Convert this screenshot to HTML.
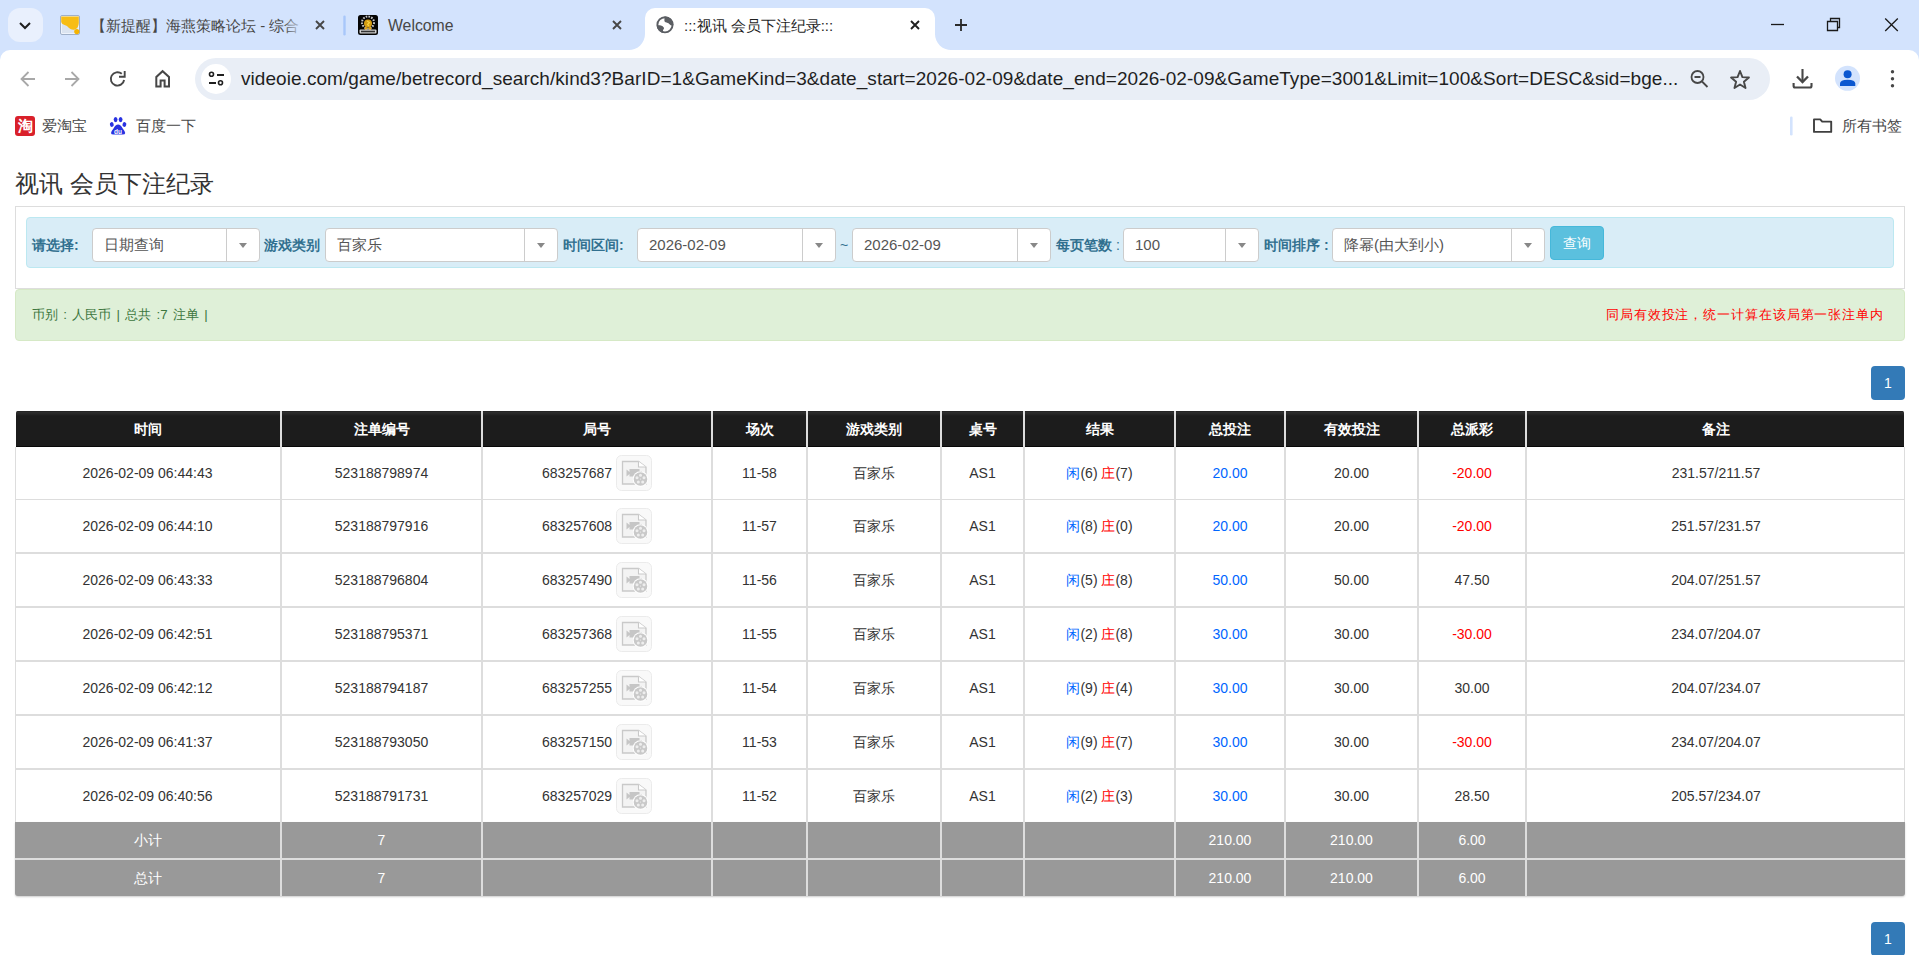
<!DOCTYPE html>
<html><head><meta charset="utf-8">
<style>
*{box-sizing:border-box;margin:0;padding:0}
html,body{width:1919px;height:955px;overflow:hidden;background:#fff;font-family:"Liberation Sans",sans-serif;color:#333;font-size:14px}
div,span{position:absolute}
svg{position:absolute;overflow:visible}
#strip{left:0;top:0;width:1919px;height:70px;background:#d3e3fd}
#toolbar{left:0;top:50px;width:1919px;height:905px;background:#fff;border-radius:10px 10px 0 0}
.tabt{top:15px;font-size:15px;color:#474747;white-space:nowrap;line-height:22px}
h3{position:absolute;left:15px;top:169px;font-size:24px;font-weight:normal;color:#333;line-height:30px;white-space:nowrap}
.panel{left:15px;top:206px;width:1890px;height:83px;border:1px solid #ddd;background:#fff}
.info{left:26px;top:217px;width:1868px;height:51px;background:#d9edf7;border:1px solid #bce8f1;border-radius:4px}
.lbl{top:236px;font-size:14px;font-weight:bold;color:#31708f;white-space:nowrap;line-height:18px}
.sel{top:228px;height:34px;background:#fff;border:1px solid #ccc;border-radius:4px}
.sel .t{left:11px;top:7px;font-size:15px;color:#555;white-space:nowrap;line-height:18px}
.sel .d{top:0;bottom:0;width:1px;background:#ccc}
.sel .c{top:14px;width:0;height:0;border-left:4px solid transparent;border-right:4px solid transparent;border-top:5px solid #888}
.btn{left:1550px;top:226px;width:54px;height:34px;background:#5bc0de;border:1px solid #46b8da;border-radius:4px;color:#fff;font-size:14px;text-align:center;line-height:32px}
.succ{left:15px;top:289px;width:1890px;height:52px;background:#dff0d8;border:1px solid #d6e9c6;border-radius:4px}
.succ .l{left:16px;top:15px;font-size:13.3px;color:#3c763d;white-space:nowrap;line-height:20px;word-spacing:1.6px}
.succ .r{right:20px;top:15px;font-size:13.3px;color:#f00;white-space:nowrap;line-height:20px;letter-spacing:0.9px}
.pg{left:1871px;width:34px;height:34px;background:#337ab7;border-radius:4px;color:#fff;font-size:14px;text-align:center;line-height:34px}
.bmt{top:115px;font-size:15px;line-height:22px;color:#474747;white-space:nowrap}
.cell{text-align:center;white-space:nowrap;font-size:14px;color:#333}
.cell span{position:static}
.thead{background:linear-gradient(#1a1a1a 0,#2e2e2e 1px,#262626 3px,#1c1c1c 5px,#1c1c1c 100%);border-radius:1.5px 1.5px 0 0;border-bottom:1px solid #080808}
.vd{width:2px;background:#ddd}
.hd{height:1px;background:#ddd}
.gray{background:#999;border-radius:0 0 3px 3px;box-shadow:0 1px 2px rgba(0,0,0,.2)}
.cell .jh{position:relative;left:-20px}
.cell .vid{position:absolute;left:134px;top:8px;width:36px;height:36px;border:1px solid #e6e6e6;border-radius:4px;background:#f9f9f9}
</style></head><body>
<div id="strip"></div>
<div id="toolbar"></div>

<!-- tab strip -->
<div class="abs" style="left:8px;top:8px;width:35px;height:34px;border-radius:12px;background:#e9f0fd"></div>
<svg style="left:0;top:0" width="1919" height="50">
  <path d="M20 23 L25 28 L30 23" fill="none" stroke="#1f1f1f" stroke-width="2"/>
</svg>
<!-- tab1 favicon -->
<svg style="left:60px;top:15px" width="20" height="20">
  <rect x="0.5" y="0.5" width="19" height="19" rx="1.5" fill="#eef3fb" stroke="#9fb0c8" stroke-width="1"/>
  <rect x="2" y="9" width="16" height="9" fill="#dbe4f0"/>
  <path d="M1.2 1.5 L18.8 1.5 L18.8 8 Q18.5 13 15 14.5 Q11.5 15.5 9 13 Q7.5 10.5 4 9.8 Q1.5 9 1.2 7 Z" fill="#f7bd14"/>
  <circle cx="16.8" cy="16.6" r="2.6" fill="#f5b300"/>
</svg>
<div class="tabt" style="left:91px;width:210px;overflow:hidden;color:#474747">【新提醒】海燕策略论坛 - 综合</div>
<div style="left:284px;top:10px;width:20px;height:30px;background:linear-gradient(to right,rgba(211,227,253,0),#d3e3fd 95%)"></div>
<svg style="left:0;top:0" width="1919" height="50">
  <path d="M316 21 L324 29 M324 21 L316 29" stroke="#474747" stroke-width="1.9"/>
  <rect x="343.3" y="15.5" width="2.4" height="20" rx="1.2" fill="#a8c7fa"/>
  <path d="M613 21 L621 29 M621 21 L613 29" stroke="#474747" stroke-width="1.9"/>
</svg>
<!-- tab2 favicon -->
<svg style="left:358px;top:15px" width="20" height="20">
  <rect x="0" y="0" width="20" height="20" rx="2.5" fill="#050505"/>
  <circle cx="10" cy="7.5" r="6" fill="none" stroke="#c8c8c8" stroke-width="2" stroke-dasharray="1.6 1.2"/>
  <circle cx="10" cy="8.5" r="4" fill="#d39b12"/>
  <path d="M9 6 L11.5 7.5 L9.5 9.5 L11 11" stroke="#f7d040" stroke-width="1.2" fill="none"/>
  <circle cx="8" cy="13.5" r="1.5" fill="#e0a010"/>
  <circle cx="12" cy="13.5" r="1.5" fill="#e0a010"/>
  <rect x="1.5" y="14.5" width="17" height="4" rx="1" fill="#d0d0d0"/>
  <rect x="3" y="15.7" width="14" height="1.6" fill="#333"/>
</svg>
<div class="tabt" style="left:388px;color:#474747;font-size:15.8px">Welcome</div>
<!-- active tab -->
<svg style="left:0;top:0" width="1919" height="50">
  <path d="M628 50 A16 16 0 0 0 645 34 L645 18 A10 10 0 0 1 655 8 L925 8 A10 10 0 0 1 935 18 L935 34 A16 16 0 0 0 952 50 Z" fill="#fff"/>
  <defs><clipPath id="gclip"><circle cx="665" cy="24.8" r="8.4"/></clipPath></defs>
  <circle cx="665" cy="24.8" r="7.6" fill="none" stroke="#5b5e63" stroke-width="1.9"/>
  <g clip-path="url(#gclip)" fill="#5b5e63">
  <path d="M664.6 15 L676 15 L676 25.2 L673 25.3 Q671 25.8 669.8 24.6 Q668.8 22.8 666.5 22.4 Q664.3 22.2 664.4 20.5 Z"/>
  <path d="M655 25.2 L660 25.3 Q662.8 25.6 663.8 27.4 Q664.4 28.8 663.2 29.8 Q662.6 31 663.4 35 L655 35 Z"/>
  </g>
  <path d="M911 21 L919 29 M919 21 L911 29" stroke="#1f1f1f" stroke-width="1.9"/>
  <path d="M961 19 L961 31 M955 25 L967 25" stroke="#2a2a2a" stroke-width="1.8"/>
  <path d="M1771 24.5 L1784 24.5" stroke="#1a1a1a" stroke-width="1.3"/>
  <path d="M1827.5 21.5 L1827.5 30.5 L1837.5 30.5 L1837.5 21.5 Z M1830.5 21.5 L1830.5 18.5 L1839.5 18.5 L1839.5 27.5 L1837.5 27.5" fill="none" stroke="#1a1a1a" stroke-width="1.3"/>
  <path d="M1885.2 18.5 L1897.8 31 M1897.8 18.5 L1885.2 31" stroke="#1a1a1a" stroke-width="1.3"/>
</svg>
<div class="tabt" style="left:684px;color:#1f1f1f">:::视讯 会员下注纪录:::</div>
<!-- toolbar -->
<div id="omni" style="left:195px;top:58px;width:1575px;height:42px;border-radius:21px;background:#e9eef6"></div>
<div style="left:201px;top:64px;width:30px;height:30px;border-radius:50%;background:#fff"></div>
<svg style="left:0;top:50px" width="1919" height="56">
  <!-- back -->
  <path d="M35 29 L21.5 29 M28.5 22 L21.5 29 L28.5 36" fill="none" stroke="#a8a8a8" stroke-width="1.8"/>
  <path d="M65 29 L78.5 29 M71.5 22 L78.5 29 L71.5 36" fill="none" stroke="#a8a8a8" stroke-width="1.8"/>
  <!-- reload -->
  <path d="M124.1 30 A6.7 6.7 0 1 1 121.8 23.8" fill="none" stroke="#474747" stroke-width="1.9"/>
  <path d="M119 26.8 L124.7 26.8 L124.7 21" fill="none" stroke="#474747" stroke-width="1.9"/>
  <!-- home -->
  <path d="M156.3 36.5 L156.3 27 L162.6 21.2 L169 27 L169 36.5 L164.6 36.5 L164.6 30.5 L160.6 30.5 L160.6 36.5 Z" fill="none" stroke="#474747" stroke-width="2" stroke-linejoin="miter"/>
  <!-- tune -->
  <circle cx="211.5" cy="24.3" r="2" fill="none" stroke="#1f1f1f" stroke-width="1.6"/>
  <path d="M217 25 L224 25 M209 33 L216 33" stroke="#1f1f1f" stroke-width="1.8"/>
  <circle cx="220.5" cy="32.8" r="2" fill="none" stroke="#1f1f1f" stroke-width="1.6"/>
  <!-- zoom -->
  <circle cx="1697.5" cy="27" r="6" fill="none" stroke="#474747" stroke-width="1.8"/>
  <path d="M1694.5 27 L1700.5 27 M1702 31.5 L1707.5 37" stroke="#474747" stroke-width="1.8"/>
  <!-- star -->
  <path d="M1740.00 21.00 L1742.41 27.08 L1748.94 27.50 L1743.90 31.67 L1745.53 38.00 L1740.00 34.50 L1734.47 38.00 L1736.10 31.67 L1731.06 27.50 L1737.59 27.08 Z" fill="none" stroke="#474747" stroke-width="1.9" stroke-linejoin="round"/>
  <!-- download -->
  <path d="M1802.5 19 L1802.5 32" stroke="#474747" stroke-width="2.1"/>
  <path d="M1797 26.5 L1802.5 32 L1808 26.5" fill="none" stroke="#474747" stroke-width="2.3"/>
  <path d="M1793.6 33 L1793.6 36 Q1793.6 37.5 1795.1 37.5 L1810 37.5 Q1811.5 37.5 1811.5 36 L1811.5 33" fill="none" stroke="#474747" stroke-width="2.1"/>
  <!-- profile -->
  <circle cx="1847.5" cy="28.3" r="12.5" fill="#d3e3fd"/>
  <circle cx="1847.6" cy="24.2" r="4" fill="#0b57d0"/>
  <path d="M1840 36 L1840 33.6 Q1840 29.7 1847.6 29.7 Q1855.3 29.7 1855.3 33.6 L1855.3 36 Z" fill="#0b57d0"/>
  <!-- menu -->
  <circle cx="1892.5" cy="21.8" r="1.7" fill="#474747"/>
  <circle cx="1892.5" cy="28.8" r="1.7" fill="#474747"/>
  <circle cx="1892.5" cy="35.7" r="1.7" fill="#474747"/>
</svg>
<div id="url" style="left:241px;top:67px;font-size:19px;letter-spacing:0.05px;line-height:24px;color:#1f1f1f;white-space:nowrap">videoie.com/game/betrecord_search/kind3?BarID=1&amp;GameKind=3&amp;date_start=2026-02-09&amp;date_end=2026-02-09&amp;GameType=3001&amp;Limit=100&amp;Sort=DESC&amp;sid=bge...</div>
<!-- bookmarks -->
<div style="left:15px;top:116px;width:20px;height:20px;background:#d9202a;border-radius:3px;color:#fff;font-size:15px;line-height:20px;text-align:center;font-weight:bold">淘</div>
<div class="bmt" style="left:42px">爱淘宝</div>
<svg style="left:0;top:106px" width="1919" height="40">
  <ellipse cx="111.8" cy="18.5" rx="1.9" ry="2.4" fill="#2932e1" transform="rotate(-15 111.8 18.5)"/>
  <ellipse cx="115.6" cy="13.6" rx="1.9" ry="2.6" fill="#2932e1"/>
  <ellipse cx="120.6" cy="13.6" rx="1.9" ry="2.6" fill="#2932e1"/>
  <ellipse cx="124.4" cy="18.5" rx="1.9" ry="2.4" fill="#2932e1" transform="rotate(15 124.4 18.5)"/>
  <path d="M118.1 18.5 Q115.5 18.5 113.5 22.5 Q111 25.5 111 27 Q111 28.6 113.5 28.6 L122.7 28.6 Q125.2 28.6 125.2 27 Q125.2 25.5 122.7 22.5 Q120.7 18.5 118.1 18.5 Z" fill="#2932e1"/>
  <text x="118.1" y="27.6" font-size="6.5" font-family="Liberation Sans" font-weight="bold" fill="#fff" text-anchor="middle">du</text>
  <rect x="1790" y="10.5" width="2.6" height="19" rx="1.3" fill="#d3e3fd"/>
  <path d="M1814 13.4 L1820.2 13.4 L1822.2 15.6 L1831.2 15.6 L1831.2 25.9 L1814 25.9 Z" fill="none" stroke="#3f3f3f" stroke-width="1.9" stroke-linejoin="round"/>
</svg>
<div class="bmt" style="left:136px">百度一下</div>
<div class="bmt" style="left:1842px">所有书签</div>

<h3>视讯 会员下注纪录</h3>
<div class="panel"></div>
<div class="info"></div>
<div class="lbl" style="left:32px">请选择:</div>
<div class="sel" style="left:92px;width:168px"><div class="t">日期查询</div><div class="d" style="left:133px"></div><div class="c" style="left:146px"></div></div>
<div class="lbl" style="left:264px">游戏类别</div>
<div class="sel" style="left:325px;width:233px"><div class="t">百家乐</div><div class="d" style="left:198px"></div><div class="c" style="left:211px"></div></div>
<div class="lbl" style="left:563px">时间区间:</div>
<div class="sel" style="left:637px;width:199px"><div class="t">2026-02-09</div><div class="d" style="left:164px"></div><div class="c" style="left:177px"></div></div>
<div class="lbl" style="left:840px;font-weight:normal">~</div>
<div class="sel" style="left:852px;width:199px"><div class="t">2026-02-09</div><div class="d" style="left:164px"></div><div class="c" style="left:177px"></div></div>
<div class="lbl" style="left:1056px">每页笔数 <span style="position:static;font-weight:normal">:</span></div>
<div class="sel" style="left:1123px;width:136px"><div class="t">100</div><div class="d" style="left:101px"></div><div class="c" style="left:114px"></div></div>
<div class="lbl" style="left:1264px">时间排序 :</div>
<div class="sel" style="left:1332px;width:213px"><div class="t">降幂(由大到小)</div><div class="d" style="left:178px"></div><div class="c" style="left:191px"></div></div>
<div class="btn">查询</div>

<div class="succ"><div class="l">币别 : 人民币 | 总共 :7 注单 |</div><div class="r">同局有效投注，统一计算在该局第一张注单内</div></div>
<div class="pg" style="top:366px">1</div>
<svg width="0" height="0" style="left:0;top:0">
<defs>
<symbol id="vidicon" viewBox="0 0 36 36">
  <rect x="0.5" y="0.5" width="35" height="35" rx="5" fill="#f9f9f9" stroke="#ebebeb"/>
  <path d="M6.5 6.5 L22.5 6.5 L30 12 L30 29 L6.5 29 Z" fill="#f3f3f3" stroke="#c9c9c9" stroke-width="1.3"/>
  <path d="M22.5 6.5 L22.5 12 L30 12" fill="#fff" stroke="#c9c9c9" stroke-width="1.1"/>
  <path d="M10.5 14.5 L13.5 17 L13.5 14 L23.5 14 L23.5 16 L26 16 L26 20.5 L23.5 20.5 L23.5 21.5 L13.5 21.5 L13.5 19 L10.5 21.5 Z" fill="#c6c6c6"/>
  <circle cx="24.5" cy="24" r="7.8" fill="#fff"/>
  <circle cx="24.5" cy="24" r="6.8" fill="#c9c9c9"/>
  <circle cx="24.5" cy="20.3" r="1.5" fill="#eee"/>
  <circle cx="28" cy="22.8" r="1.5" fill="#eee"/>
  <circle cx="26.7" cy="27" r="1.5" fill="#eee"/>
  <circle cx="22.3" cy="27" r="1.5" fill="#eee"/>
  <circle cx="21" cy="22.8" r="1.5" fill="#eee"/>
  <circle cx="24.5" cy="24" r="0.6" fill="#eee"/>
</symbol>
</defs></svg>
<div class="thead" style="left:16px;top:411px;width:1888px;height:36px"></div>
<div class="cell" style="left:15px;top:411px;width:265px;height:36px;line-height:36px;color:#fff;font-weight:bold">时间</div>
<div class="cell" style="left:282px;top:411px;width:199px;height:36px;line-height:36px;color:#fff;font-weight:bold">注单编号</div>
<div class="cell" style="left:483px;top:411px;width:228px;height:36px;line-height:36px;color:#fff;font-weight:bold">局号</div>
<div class="cell" style="left:713px;top:411px;width:93px;height:36px;line-height:36px;color:#fff;font-weight:bold">场次</div>
<div class="cell" style="left:808px;top:411px;width:132px;height:36px;line-height:36px;color:#fff;font-weight:bold">游戏类别</div>
<div class="cell" style="left:942px;top:411px;width:81px;height:36px;line-height:36px;color:#fff;font-weight:bold">桌号</div>
<div class="cell" style="left:1025px;top:411px;width:149px;height:36px;line-height:36px;color:#fff;font-weight:bold">结果</div>
<div class="cell" style="left:1176px;top:411px;width:108px;height:36px;line-height:36px;color:#fff;font-weight:bold">总投注</div>
<div class="cell" style="left:1286px;top:411px;width:131px;height:36px;line-height:36px;color:#fff;font-weight:bold">有效投注</div>
<div class="cell" style="left:1419px;top:411px;width:106px;height:36px;line-height:36px;color:#fff;font-weight:bold">总派彩</div>
<div class="cell" style="left:1527px;top:411px;width:378px;height:36px;line-height:36px;color:#fff;font-weight:bold">备注</div>
<div class="vd" style="left:280px;top:411px;height:36px"></div>
<div class="vd" style="left:481px;top:411px;height:36px"></div>
<div class="vd" style="left:711px;top:411px;height:36px"></div>
<div class="vd" style="left:806px;top:411px;height:36px"></div>
<div class="vd" style="left:940px;top:411px;height:36px"></div>
<div class="vd" style="left:1023px;top:411px;height:36px"></div>
<div class="vd" style="left:1174px;top:411px;height:36px"></div>
<div class="vd" style="left:1284px;top:411px;height:36px"></div>
<div class="vd" style="left:1417px;top:411px;height:36px"></div>
<div class="vd" style="left:1525px;top:411px;height:36px"></div>
<div class="cell" style="left:15px;top:447px;width:265px;height:52px;line-height:52px;">2026-02-09 06:44:43</div>
<div class="cell" style="left:282px;top:447px;width:199px;height:52px;line-height:52px;">523188798974</div>
<div class="cell" style="left:542px;top:447px;height:52px;line-height:52px;text-align:left">683257687</div>
<svg class="vid" style="left:616px;top:455px" width="36" height="36"><use href="#vidicon"/></svg>
<div class="cell" style="left:713px;top:447px;width:93px;height:52px;line-height:52px;">11-58</div>
<div class="cell" style="left:808px;top:447px;width:132px;height:52px;line-height:52px;">百家乐</div>
<div class="cell" style="left:942px;top:447px;width:81px;height:52px;line-height:52px;">AS1</div>
<div class="cell" style="left:1025px;top:447px;width:149px;height:52px;line-height:52px;"><span style="color:#06f">闲</span>(6) <span style="color:#f00">庄</span>(7)</div>
<div class="cell" style="left:1176px;top:447px;width:108px;height:52px;line-height:52px;"><span style="color:#06f">20.00</span></div>
<div class="cell" style="left:1286px;top:447px;width:131px;height:52px;line-height:52px;">20.00</div>
<div class="cell" style="left:1419px;top:447px;width:106px;height:52px;line-height:52px;"><span style="color:#f00">-20.00</span></div>
<div class="cell" style="left:1527px;top:447px;width:378px;height:52px;line-height:52px;">231.57/211.57</div>
<div class="hd" style="left:15px;top:499px;width:1890px;height:1px"></div>
<div class="cell" style="left:15px;top:500px;width:265px;height:52px;line-height:52px;">2026-02-09 06:44:10</div>
<div class="cell" style="left:282px;top:500px;width:199px;height:52px;line-height:52px;">523188797916</div>
<div class="cell" style="left:542px;top:500px;height:52px;line-height:52px;text-align:left">683257608</div>
<svg class="vid" style="left:616px;top:508px" width="36" height="36"><use href="#vidicon"/></svg>
<div class="cell" style="left:713px;top:500px;width:93px;height:52px;line-height:52px;">11-57</div>
<div class="cell" style="left:808px;top:500px;width:132px;height:52px;line-height:52px;">百家乐</div>
<div class="cell" style="left:942px;top:500px;width:81px;height:52px;line-height:52px;">AS1</div>
<div class="cell" style="left:1025px;top:500px;width:149px;height:52px;line-height:52px;"><span style="color:#06f">闲</span>(8) <span style="color:#f00">庄</span>(0)</div>
<div class="cell" style="left:1176px;top:500px;width:108px;height:52px;line-height:52px;"><span style="color:#06f">20.00</span></div>
<div class="cell" style="left:1286px;top:500px;width:131px;height:52px;line-height:52px;">20.00</div>
<div class="cell" style="left:1419px;top:500px;width:106px;height:52px;line-height:52px;"><span style="color:#f00">-20.00</span></div>
<div class="cell" style="left:1527px;top:500px;width:378px;height:52px;line-height:52px;">251.57/231.57</div>
<div class="hd" style="left:15px;top:552px;width:1890px;height:2px"></div>
<div class="cell" style="left:15px;top:554px;width:265px;height:52px;line-height:52px;">2026-02-09 06:43:33</div>
<div class="cell" style="left:282px;top:554px;width:199px;height:52px;line-height:52px;">523188796804</div>
<div class="cell" style="left:542px;top:554px;height:52px;line-height:52px;text-align:left">683257490</div>
<svg class="vid" style="left:616px;top:562px" width="36" height="36"><use href="#vidicon"/></svg>
<div class="cell" style="left:713px;top:554px;width:93px;height:52px;line-height:52px;">11-56</div>
<div class="cell" style="left:808px;top:554px;width:132px;height:52px;line-height:52px;">百家乐</div>
<div class="cell" style="left:942px;top:554px;width:81px;height:52px;line-height:52px;">AS1</div>
<div class="cell" style="left:1025px;top:554px;width:149px;height:52px;line-height:52px;"><span style="color:#06f">闲</span>(5) <span style="color:#f00">庄</span>(8)</div>
<div class="cell" style="left:1176px;top:554px;width:108px;height:52px;line-height:52px;"><span style="color:#06f">50.00</span></div>
<div class="cell" style="left:1286px;top:554px;width:131px;height:52px;line-height:52px;">50.00</div>
<div class="cell" style="left:1419px;top:554px;width:106px;height:52px;line-height:52px;">47.50</div>
<div class="cell" style="left:1527px;top:554px;width:378px;height:52px;line-height:52px;">204.07/251.57</div>
<div class="hd" style="left:15px;top:606px;width:1890px;height:2px"></div>
<div class="cell" style="left:15px;top:608px;width:265px;height:52px;line-height:52px;">2026-02-09 06:42:51</div>
<div class="cell" style="left:282px;top:608px;width:199px;height:52px;line-height:52px;">523188795371</div>
<div class="cell" style="left:542px;top:608px;height:52px;line-height:52px;text-align:left">683257368</div>
<svg class="vid" style="left:616px;top:616px" width="36" height="36"><use href="#vidicon"/></svg>
<div class="cell" style="left:713px;top:608px;width:93px;height:52px;line-height:52px;">11-55</div>
<div class="cell" style="left:808px;top:608px;width:132px;height:52px;line-height:52px;">百家乐</div>
<div class="cell" style="left:942px;top:608px;width:81px;height:52px;line-height:52px;">AS1</div>
<div class="cell" style="left:1025px;top:608px;width:149px;height:52px;line-height:52px;"><span style="color:#06f">闲</span>(2) <span style="color:#f00">庄</span>(8)</div>
<div class="cell" style="left:1176px;top:608px;width:108px;height:52px;line-height:52px;"><span style="color:#06f">30.00</span></div>
<div class="cell" style="left:1286px;top:608px;width:131px;height:52px;line-height:52px;">30.00</div>
<div class="cell" style="left:1419px;top:608px;width:106px;height:52px;line-height:52px;"><span style="color:#f00">-30.00</span></div>
<div class="cell" style="left:1527px;top:608px;width:378px;height:52px;line-height:52px;">234.07/204.07</div>
<div class="hd" style="left:15px;top:660px;width:1890px;height:2px"></div>
<div class="cell" style="left:15px;top:662px;width:265px;height:52px;line-height:52px;">2026-02-09 06:42:12</div>
<div class="cell" style="left:282px;top:662px;width:199px;height:52px;line-height:52px;">523188794187</div>
<div class="cell" style="left:542px;top:662px;height:52px;line-height:52px;text-align:left">683257255</div>
<svg class="vid" style="left:616px;top:670px" width="36" height="36"><use href="#vidicon"/></svg>
<div class="cell" style="left:713px;top:662px;width:93px;height:52px;line-height:52px;">11-54</div>
<div class="cell" style="left:808px;top:662px;width:132px;height:52px;line-height:52px;">百家乐</div>
<div class="cell" style="left:942px;top:662px;width:81px;height:52px;line-height:52px;">AS1</div>
<div class="cell" style="left:1025px;top:662px;width:149px;height:52px;line-height:52px;"><span style="color:#06f">闲</span>(9) <span style="color:#f00">庄</span>(4)</div>
<div class="cell" style="left:1176px;top:662px;width:108px;height:52px;line-height:52px;"><span style="color:#06f">30.00</span></div>
<div class="cell" style="left:1286px;top:662px;width:131px;height:52px;line-height:52px;">30.00</div>
<div class="cell" style="left:1419px;top:662px;width:106px;height:52px;line-height:52px;">30.00</div>
<div class="cell" style="left:1527px;top:662px;width:378px;height:52px;line-height:52px;">204.07/234.07</div>
<div class="hd" style="left:15px;top:714px;width:1890px;height:2px"></div>
<div class="cell" style="left:15px;top:716px;width:265px;height:52px;line-height:52px;">2026-02-09 06:41:37</div>
<div class="cell" style="left:282px;top:716px;width:199px;height:52px;line-height:52px;">523188793050</div>
<div class="cell" style="left:542px;top:716px;height:52px;line-height:52px;text-align:left">683257150</div>
<svg class="vid" style="left:616px;top:724px" width="36" height="36"><use href="#vidicon"/></svg>
<div class="cell" style="left:713px;top:716px;width:93px;height:52px;line-height:52px;">11-53</div>
<div class="cell" style="left:808px;top:716px;width:132px;height:52px;line-height:52px;">百家乐</div>
<div class="cell" style="left:942px;top:716px;width:81px;height:52px;line-height:52px;">AS1</div>
<div class="cell" style="left:1025px;top:716px;width:149px;height:52px;line-height:52px;"><span style="color:#06f">闲</span>(9) <span style="color:#f00">庄</span>(7)</div>
<div class="cell" style="left:1176px;top:716px;width:108px;height:52px;line-height:52px;"><span style="color:#06f">30.00</span></div>
<div class="cell" style="left:1286px;top:716px;width:131px;height:52px;line-height:52px;">30.00</div>
<div class="cell" style="left:1419px;top:716px;width:106px;height:52px;line-height:52px;"><span style="color:#f00">-30.00</span></div>
<div class="cell" style="left:1527px;top:716px;width:378px;height:52px;line-height:52px;">234.07/204.07</div>
<div class="hd" style="left:15px;top:768px;width:1890px;height:2px"></div>
<div class="cell" style="left:15px;top:770px;width:265px;height:52px;line-height:52px;">2026-02-09 06:40:56</div>
<div class="cell" style="left:282px;top:770px;width:199px;height:52px;line-height:52px;">523188791731</div>
<div class="cell" style="left:542px;top:770px;height:52px;line-height:52px;text-align:left">683257029</div>
<svg class="vid" style="left:616px;top:778px" width="36" height="36"><use href="#vidicon"/></svg>
<div class="cell" style="left:713px;top:770px;width:93px;height:52px;line-height:52px;">11-52</div>
<div class="cell" style="left:808px;top:770px;width:132px;height:52px;line-height:52px;">百家乐</div>
<div class="cell" style="left:942px;top:770px;width:81px;height:52px;line-height:52px;">AS1</div>
<div class="cell" style="left:1025px;top:770px;width:149px;height:52px;line-height:52px;"><span style="color:#06f">闲</span>(2) <span style="color:#f00">庄</span>(3)</div>
<div class="cell" style="left:1176px;top:770px;width:108px;height:52px;line-height:52px;"><span style="color:#06f">30.00</span></div>
<div class="cell" style="left:1286px;top:770px;width:131px;height:52px;line-height:52px;">30.00</div>
<div class="cell" style="left:1419px;top:770px;width:106px;height:52px;line-height:52px;">28.50</div>
<div class="cell" style="left:1527px;top:770px;width:378px;height:52px;line-height:52px;">205.57/234.07</div>
<div class="gray" style="left:15px;top:822px;width:1890px;height:74px"></div>
<div class="hd" style="left:15px;top:858px;width:1890px;height:2px"></div>
<div class="cell" style="left:15px;top:822px;width:265px;height:36px;line-height:36px;color:#fff">小计</div>
<div class="cell" style="left:282px;top:822px;width:199px;height:36px;line-height:36px;color:#fff">7</div>
<div class="cell" style="left:1176px;top:822px;width:108px;height:36px;line-height:36px;color:#fff">210.00</div>
<div class="cell" style="left:1286px;top:822px;width:131px;height:36px;line-height:36px;color:#fff">210.00</div>
<div class="cell" style="left:1419px;top:822px;width:106px;height:36px;line-height:36px;color:#fff">6.00</div>
<div class="cell" style="left:15px;top:860px;width:265px;height:36px;line-height:36px;color:#fff">总计</div>
<div class="cell" style="left:282px;top:860px;width:199px;height:36px;line-height:36px;color:#fff">7</div>
<div class="cell" style="left:1176px;top:860px;width:108px;height:36px;line-height:36px;color:#fff">210.00</div>
<div class="cell" style="left:1286px;top:860px;width:131px;height:36px;line-height:36px;color:#fff">210.00</div>
<div class="cell" style="left:1419px;top:860px;width:106px;height:36px;line-height:36px;color:#fff">6.00</div>
<div class="vd" style="left:280px;top:447px;height:449px"></div>
<div class="vd" style="left:481px;top:447px;height:449px"></div>
<div class="vd" style="left:711px;top:447px;height:449px"></div>
<div class="vd" style="left:806px;top:447px;height:449px"></div>
<div class="vd" style="left:940px;top:447px;height:449px"></div>
<div class="vd" style="left:1023px;top:447px;height:449px"></div>
<div class="vd" style="left:1174px;top:447px;height:449px"></div>
<div class="vd" style="left:1284px;top:447px;height:449px"></div>
<div class="vd" style="left:1417px;top:447px;height:449px"></div>
<div class="vd" style="left:1525px;top:447px;height:449px"></div>
<div class="vd" style="left:15px;top:447px;height:375px;width:1px"></div>
<div class="vd" style="left:1904px;top:447px;height:375px;width:1px"></div>
<div class="pg" style="top:922px">1</div>
</body></html>
